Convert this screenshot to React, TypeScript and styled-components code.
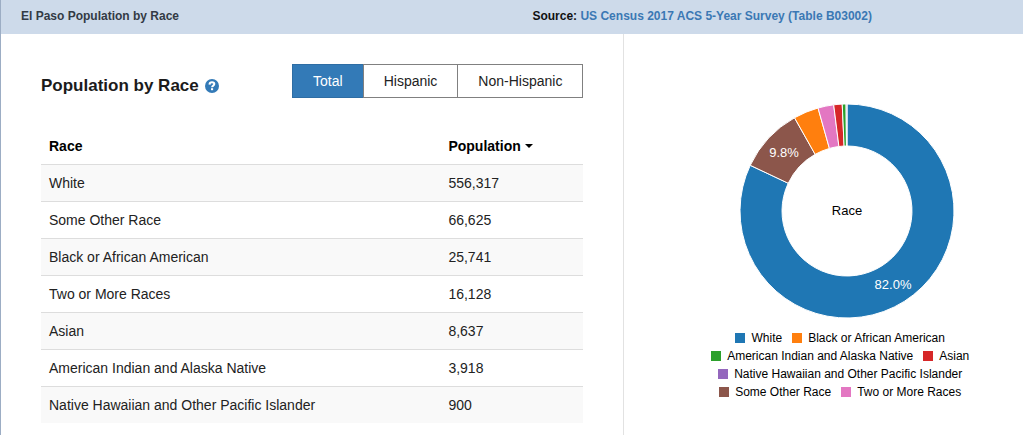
import React, { useState } from 'react';
import styled, { createGlobalStyle } from 'styled-components';

const GlobalStyle = createGlobalStyle`
  *, *::before, *::after { box-sizing: border-box; }
  body {
    margin: 0;
    background: #fff;
    color: #222;
    font-family: 'Liberation Sans', Arial, Helvetica, sans-serif;
    font-size: 14px;
    line-height: 20px;
  }
`;

const Panel = styled.div`
  min-height: 100vh;
  display: flex;
  flex-direction: column;
  border-left: 1px solid #9cadc4;
`;

const PanelHeader = styled.header`
  display: flex;
  padding: 6px 0 8px;
  background: #cddaea;
  font-size: 12px;
  font-weight: bold;
`;

const HeaderTitle = styled.div`
  flex: 0 0 52%;
  padding-left: 20px;
  color: #333a45;
`;

const Source = styled.div`
  flex: 1;
  color: #111;
`;

const SourceLink = styled.a`
  color: #3b78b4;
  text-decoration: none;
`;

const PanelBody = styled.main`
  flex: 1;
  display: flex;
`;

const TablePane = styled.section`
  flex: 0 0 61%;
  padding: 30px 40px 12px;
  border-right: 1px solid #e2e2e2;
`;

const ChartPane = styled.section`
  flex: 1;
  display: flex;
  flex-direction: column;
  align-items: center;
  padding: 69px 0 20px 47px;
`;

const Toolbar = styled.div`
  display: flex;
  justify-content: space-between;
  align-items: center;
  margin-bottom: 30px;
`;

const Heading = styled.h2`
  display: flex;
  align-items: center;
  gap: 6px;
  margin: 10px 0 0;
  font-size: 17px;
  line-height: 20px;
  color: #1b1b1b;
`;

const HelpButton = styled.button`
  display: flex;
  padding: 0;
  border: 0;
  background: none;
  cursor: pointer;
`;

const ButtonGroup = styled.div`
  display: flex;
`;

const FilterButton = styled.button<{ $active: boolean }>`
  height: 34px;
  padding: 0 20px;
  border: 1px solid ${(p) => (p.$active ? '#2e6da4' : '#808080')};
  background: ${(p) => (p.$active ? '#337ab7' : '#fff')};
  color: ${(p) => (p.$active ? '#fff' : '#222')};
  font: inherit;
  cursor: pointer;

  & + & {
    margin-left: -1px;
  }
`;

const DataTable = styled.table`
  width: 100%;
  table-layout: fixed;
  border-collapse: collapse;
`;

const HeadCell = styled.th<{ $width: string }>`
  width: ${(p) => p.$width};
  padding: 8px;
  text-align: left;
  color: #000;
`;

const SortButton = styled.button`
  display: flex;
  align-items: center;
  gap: 4px;
  padding: 0;
  border: 0;
  background: none;
  color: inherit;
  font: inherit;
  cursor: pointer;
`;

const Caret = styled.span`
  border: 4px solid transparent;
  border-top-color: #000;
  border-bottom: 0;
`;

const BodyRow = styled.tr`
  border-top: 1px solid #ddd;

  &:nth-child(odd) {
    background: #f9f9f9;
  }
`;

const Cell = styled.td`
  padding: 8px;
`;

const Legend = styled.div`
  display: flex;
  flex-direction: column;
  align-items: center;
  margin-top: 10px;
  padding-right: 14px;
  font-size: 12px;
  line-height: 18px;
  color: #000;
`;

const LegendRow = styled.div`
  display: flex;
  gap: 10px;
  white-space: nowrap;
`;

const LegendItem = styled.span`
  display: flex;
  align-items: center;
  gap: 6px;
`;

const Swatch = styled.span<{ $color: string }>`
  width: 10px;
  height: 10px;
  background: ${(p) => p.$color};
`;

const SliceLabel = styled.text`
  fill: #fff;
  font-size: 13px;
  text-anchor: middle;
`;

const CenterLabel = styled.text`
  fill: #000;
  font-size: 13px;
  text-anchor: middle;
`;

const races = [
  { name: 'White', population: 556317, color: '#1f77b4' },
  { name: 'Some Other Race', population: 66625, color: '#8c564b' },
  { name: 'Black or African American', population: 25741, color: '#ff7f0e' },
  { name: 'Two or More Races', population: 16128, color: '#e377c2' },
  { name: 'Asian', population: 8637, color: '#d62728' },
  { name: 'American Indian and Alaska Native', population: 3918, color: '#2ca02c' },
  { name: 'Native Hawaiian and Other Pacific Islander', population: 900, color: '#9467bd' },
];

const legendRows = [
  ['White', 'Black or African American'],
  ['American Indian and Alaska Native', 'Asian'],
  ['Native Hawaiian and Other Pacific Islander'],
  ['Some Other Race', 'Two or More Races'],
];

const colorOf = (name: string) => races.find((r) => r.name === name)!.color;

const OUTER = 107;
const INNER = 65;

const point = (radius: number, angle: number) =>
  `${(radius * Math.sin(angle)).toFixed(2)} ${(-radius * Math.cos(angle)).toFixed(2)}`;

function Donut() {
  const total = races.reduce((sum, r) => sum + r.population, 0);
  let angle = 0;
  const slices = races.map((r) => {
    const start = angle;
    angle += (r.population / total) * Math.PI * 2;
    return { ...r, start, end: angle, share: r.population / total };
  });

  return (
    <svg width="216" height="216" viewBox="-108 -108 216 216" role="img" aria-label="Race">
      {slices.map((s) => {
        const large = s.end - s.start > Math.PI ? 1 : 0;
        return (
          <path
            key={s.name}
            d={`M${point(OUTER, s.start)}A${OUTER} ${OUTER} 0 ${large} 1 ${point(OUTER, s.end)}L${point(INNER, s.end)}A${INNER} ${INNER} 0 ${large} 0 ${point(INNER, s.start)}Z`}
            fill={s.color}
            stroke="#fff"
          />
        );
      })}
      {slices
        .filter((s) => s.share > 0.05)
        .map((s) => {
          const mid = (s.start + s.end) / 2;
          const r = (OUTER + INNER) / 2;
          return (
            <SliceLabel key={s.name} x={Math.round(r * Math.sin(mid))} y={Math.round(-r * Math.cos(mid)) + 5}>
              {(s.share * 100).toFixed(1)}%
            </SliceLabel>
          );
        })}
      <CenterLabel x="0" y="4">Race</CenterLabel>
    </svg>
  );
}

const filters = ['Total', 'Hispanic', 'Non-Hispanic'];

export default function App() {
  const [active, setActive] = useState('Total');

  return (
    <Panel>
      <GlobalStyle />
      <PanelHeader>
        <HeaderTitle>El Paso Population by Race</HeaderTitle>
        <Source>
          Source: <SourceLink href="#source">US Census 2017 ACS 5-Year Survey (Table B03002)</SourceLink>
        </Source>
      </PanelHeader>
      <PanelBody>
        <TablePane>
          <Toolbar>
            <Heading>
              Population by Race
              <HelpButton type="button" aria-label="Help">
                <svg width="14" height="14" viewBox="0 0 14 14">
                  <circle cx="7" cy="7" r="7" fill="#337ab7" />
                  <path
                    d="M4.5 5.6C4.6 3.8 5.6 3.3 7 3.3s2.3.6 2.3 1.8c0 1.6-2.2 1.4-2.2 3.2"
                    fill="none"
                    stroke="#fff"
                    strokeWidth="2"
                  />
                  <rect x="6" y="9.2" width="2.1" height="2" fill="#fff" />
                </svg>
              </HelpButton>
            </Heading>
            <ButtonGroup>
              {filters.map((f) => (
                <FilterButton key={f} type="button" $active={f === active} onClick={() => setActive(f)}>
                  {f}
                </FilterButton>
              ))}
            </ButtonGroup>
          </Toolbar>
          <DataTable>
            <thead>
              <tr>
                <HeadCell $width="auto">Race</HeadCell>
                <HeadCell $width="143px">
                  <SortButton type="button">
                    Population
                    <Caret />
                  </SortButton>
                </HeadCell>
              </tr>
            </thead>
            <tbody>
              {races.map((r) => (
                <BodyRow key={r.name}>
                  <Cell>{r.name}</Cell>
                  <Cell>{r.population.toLocaleString('en-US')}</Cell>
                </BodyRow>
              ))}
            </tbody>
          </DataTable>
        </TablePane>
        <ChartPane>
          <Donut />
          <Legend>
            {legendRows.map((row) => (
              <LegendRow key={row[0]}>
                {row.map((name) => (
                  <LegendItem key={name}>
                    <Swatch $color={colorOf(name)} />
                    {name}
                  </LegendItem>
                ))}
              </LegendRow>
            ))}
          </Legend>
        </ChartPane>
      </PanelBody>
    </Panel>
  );
}
